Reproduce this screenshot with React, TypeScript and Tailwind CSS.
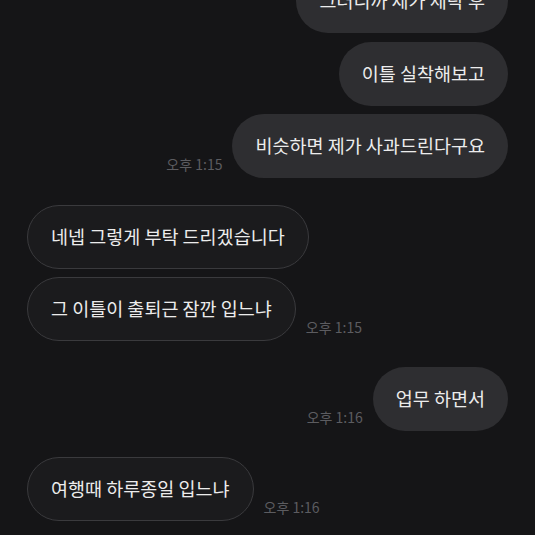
type Msg = {
  text: string;
  mine: boolean;
  time?: string;
  mt: string;
};

const messages: Msg[] = [
  { text: "그러니까 제가 세탁 후", mine: true, mt: "-mt-[31px]" },
  { text: "이틀 실착해보고", mine: true, mt: "mt-[9px]" },
  { text: "비슷하면 제가 사과드린다구요", mine: true, time: "오후 1:15", mt: "mt-[8px]" },
  { text: "네넵 그렇게 부탁 드리겠습니다", mine: false, mt: "mt-[27px]" },
  { text: "그 이틀이 출퇴근 잠깐 입느냐", mine: false, time: "오후 1:15", mt: "mt-[8px]" },
  { text: "업무 하면서", mine: true, time: "오후 1:16", mt: "mt-[26px]" },
  { text: "여행때 하루종일 입느냐", mine: false, time: "오후 1:16", mt: "mt-[26px]" },
];

function Bubble({ msg }: { msg: Msg }) {
  const time = msg.time ? (
    <span className="mb-[6px] shrink-0 text-[14px] leading-[16px] text-[#5c5c60]">
      {msg.time}
    </span>
  ) : null;

  return (
    <div
      className={`flex items-end gap-[10px] ${msg.mt} ${
        msg.mine ? "justify-end" : "justify-start"
      }`}
    >
      {msg.mine && time}
      <div
        className={`flex h-[64px] items-center whitespace-nowrap rounded-full px-[23px] text-[18.5px] text-[#ececec] ${
          msg.mine
            ? "bg-[#2e2e31]"
            : "border border-[#3a3a3d] bg-[#1b1b1d]"
        }`}
      >
        {msg.text}
      </div>
      {!msg.mine && time}
    </div>
  );
}

export default function App() {
  return (
    <div
      className="h-[535px] w-[535px] overflow-hidden bg-[#151517] px-[27px]"
      style={{ fontFamily: '"Noto Sans CJK KR", "Noto Sans", sans-serif' }}
    >
      <div className="flex flex-col">
        {messages.map((m, i) => (
          <Bubble key={i} msg={m} />
        ))}
      </div>
    </div>
  );
}
